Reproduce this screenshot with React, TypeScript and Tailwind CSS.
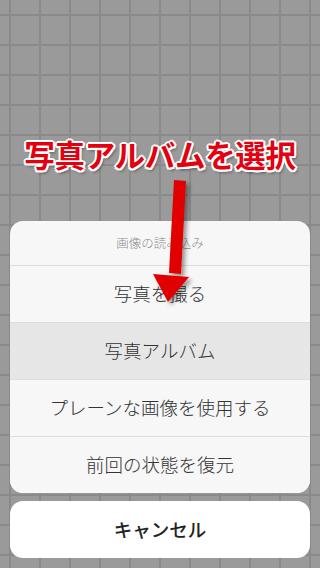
import React from "react";

const rows = [
  { label: "写真を撮る", active: false },
  { label: "写真アルバム", active: true },
  { label: "プレーンな画像を使用する", active: false },
  { label: "前回の状態を復元", active: false },
];

export default function App() {
  return (
    <div
      className="relative flex h-[568px] w-[320px] flex-col overflow-hidden bg-[#9a9a9a] bg-[image:linear-gradient(to_right,#8a8a8a_2px,transparent_2px),linear-gradient(to_bottom,#8a8a8a_2px,transparent_2px)] bg-[size:30px_30px] bg-[position:9px_14px]"
      style={{ fontFamily: '"Noto Sans CJK JP", "Noto Sans", sans-serif' }}
    >
      <div className="flex justify-center pt-[135px]">
        <span className="text-[30.5px] font-bold leading-[38px] tracking-[-0.3px] text-[#e3000f] [text-shadow:2px_0_0_#fff,-2px_0_0_#fff,0_2px_0_#fff,0_-2px_0_#fff,1.5px_1.5px_0_#fff,-1.5px_-1.5px_0_#fff,1.5px_-1.5px_0_#fff,-1.5px_1.5px_0_#fff,2px_3px_3px_rgba(0,0,0,0.45)]">
          写真アルバムを選択
        </span>
      </div>

      <div className="mt-auto flex flex-col gap-[8px] px-[10px] pb-[10px]">
        <div className="flex flex-col overflow-hidden rounded-[13px] bg-[#f7f7f7]">
          <div className="flex h-[44px] items-center justify-center text-[12.5px] font-light text-[#8e8e8e]">
            画像の読み込み
          </div>
          {rows.map((r) => (
            <div
              key={r.label}
              className={`flex h-[57px] items-center justify-center border-t border-[#dedede] text-[18.5px] font-light text-[#333] ${
                r.active ? "bg-[#e6e6e6]" : "bg-[#f7f7f7]"
              }`}
            >
              {r.label}
            </div>
          ))}
        </div>
        <div className="flex h-[57px] items-center justify-center rounded-[13px] bg-white text-[18.5px] font-medium text-[#222]">
          キャンセル
        </div>
      </div>

      <svg
        className="pointer-events-none absolute left-0 top-0"
        width="320"
        height="568"
        viewBox="0 0 320 568"
      >
        <defs>
          <filter id="sh" x="-50%" y="-50%" width="200%" height="200%">
            <feDropShadow dx="3" dy="3" stdDeviation="2" floodColor="#000" floodOpacity="0.4" />
          </filter>
        </defs>
        <g filter="url(#sh)" fill="#e00000">
          <polygon points="174,180 186,181 181,274 169,273" />
          <polygon points="153,274 189,277 168,302" />
        </g>
      </svg>
    </div>
  );
}
